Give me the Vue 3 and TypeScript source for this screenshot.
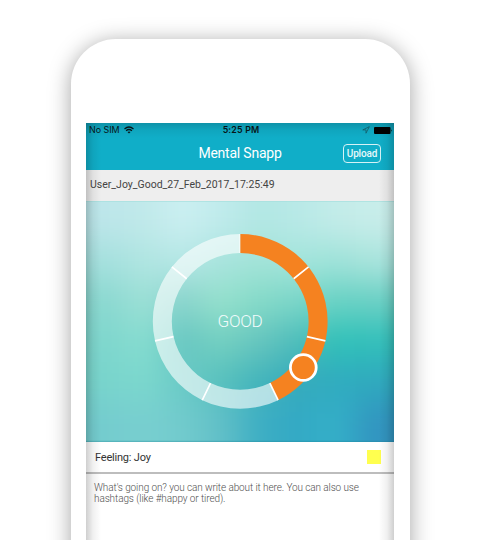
<script setup lang="ts">
interface Cell { x: number; y: number; color: string }

const palette: string[][] = [
  ['#bde6ea', '#c0e9ea', '#cbeff1', '#c0ebec', '#b2e7e4', '#b8e9e7', '#c3ece9', '#c8edea'],
  ['#a5e0de', '#b0e6e2', '#b6e7e6', '#a8e4de', '#a3e4d8', '#a3e5dc', '#9fe3d9', '#aae4dd'],
  ['#8ad8d0', '#9ce0d6', '#88d3cc', '#95e1cc', '#84dac8', '#7bd6c8', '#68d2c4', '#6ad0c4'],
  ['#7ed6cd', '#86ddd0', '#66c6c1', '#74d0c1', '#66c5be', '#4dbcba', '#30c1b8', '#32c0ba'],
  ['#78d4cc', '#7cd8ce', '#6acac6', '#56c0bd', '#42b4bb', '#35aabc', '#30acbf', '#2fa9be'],
  ['#74ccce', '#78cfd0', '#72cbcd', '#62c0c8', '#3daec3', '#33a9c5', '#34b0c8', '#3294c0'],
]

const cellW = 38.5
const cellH = 40.2
const cells: Cell[] = []
for (let r = -1; r <= 6; r++) {
  for (let c = -1; c <= 8; c++) {
    const row = palette[Math.min(5, Math.max(0, r))]
    cells.push({ x: c * cellW, y: r * cellH, color: row[Math.min(7, Math.max(0, c))] })
  }
}

const cx = 154.2
const cy = 120.4
const outer = 87.4
const inner = 68.4
const step = (Math.PI * 2) / 7

function point(radius: number, angle: number): string {
  return `${(cx + radius * Math.sin(angle)).toFixed(2)} ${(cy - radius * Math.cos(angle)).toFixed(2)}`
}

function arc(from: number, to: number): string {
  const large = to - from > Math.PI ? 1 : 0
  return `M${point(outer, from)}A${outer} ${outer} 0 ${large} 1 ${point(outer, to)}L${point(inner, to)}A${inner} ${inner} 0 ${large} 0 ${point(inner, from)}Z`
}

const filled = arc(0, step * 3)
const remaining = arc(step * 3, step * 7)
const ticks = [1, 2, 3, 4, 5, 6].map((i) => `M${point(inner, step * i)}L${point(outer, step * i)}`).join('')
</script>

<template>
  <main class="stage">
    <div class="phone">
      <div class="screen">
        <header class="top">
          <div class="status">
            <div class="carrier">
              <span>No SIM</span>
              <svg width="10" height="8" viewBox="0 0 10 8" fill="none" stroke="#071619" stroke-width="1.3">
                <path d="M.5 2.9Q5-.9 9.500 2.900M2.100 4.700Q5 2.300 7.900 4.700" />
                <path d="M3.500 6Q5 4.800 6.500 6L5 7.600Z" fill="#071619" stroke="none" />
              </svg>
            </div>
            <span class="clock">5:25 PM</span>
            <div class="power">
              <svg width="8" height="8" viewBox="0 0 8 8" fill="none" stroke="#17606b" stroke-width=".8">
                <path d="M7.300.7L.8 3.900H4V7.200Z" />
              </svg>
              <svg width="19" height="7" viewBox="0 0 19 7">
                <rect width="16.500" height="7" rx="1" fill="#000" />
                <path d="M17.200 2.200Q18.600 3.500 17.200 4.800Z" fill="#000" />
              </svg>
            </div>
          </div>
          <div class="nav">
            <h1>Mental Snapp</h1>
            <button type="button">Upload</button>
          </div>
        </header>
        <div class="filename">User_Joy_Good_27_Feb_2017_17:25:49</div>
        <svg class="mood" width="308" height="241" viewBox="0 0 308 241">
          <defs>
            <filter id="soft" filterUnits="userSpaceOnUse" x="-50" y="-50" width="408" height="341" color-interpolation-filters="sRGB">
              <feGaussianBlur stdDeviation="16" />
            </filter>
          </defs>
          <g filter="url(#soft)">
            <rect v-for="(cell, i) in cells" :key="i" :x="cell.x" :y="cell.y" width="39" height="40.7" :fill="cell.color" />
          </g>
          <path d="M0 .5H308" stroke="#a6e0de" stroke-opacity=".7" />
          <path d="M0 240.300H308" stroke="#1b8398" stroke-opacity=".4" />
          <path :d="remaining" fill="#fff" fill-opacity=".61" />
          <path :d="filled" fill="#f58220" />
          <path d="M153.800 33V52" stroke="#fff" stroke-opacity=".7" />
          <path :d="ticks" stroke="#fff" stroke-width="1.600" />
          <circle cx="217.300" cy="166.500" r="12.900" fill="#f58220" stroke="#fff" stroke-width="2.800" />
          <text x="153.900" y="126.300" text-anchor="middle">GOOD</text>
        </svg>
        <div class="feeling">
          <span>Feeling: Joy</span>
          <span class="swatch"></span>
        </div>
        <p class="note">What's going on? you can write about it here. You can also use<br />hashtags (like #happy or tired).</p>
      </div>
    </div>
  </main>
</template>

<style>
body {
  margin: 0;
  background: #fff;
}
</style>

<style scoped>
.stage {
  box-sizing: border-box;
  height: 540px;
  padding: 39px 70px 0 71px;
  overflow: hidden;
  font-family: Roboto, sans-serif;
}
.phone {
  box-sizing: border-box;
  height: 620px;
  padding: 84px 16px 0 15px;
  border-radius: 45px;
  background: #fff;
  box-shadow: 0 3px 22px rgba(0, 0, 0, .36);
}
.screen {
  position: relative;
  height: 536px;
  background: #fff;
}
.screen::after {
  content: "";
  position: absolute;
  inset: 0;
  pointer-events: none;
  background:
    linear-gradient(90deg, rgba(0, 0, 0, .19), rgba(0, 0, 0, .06) 7px, transparent 15px),
    linear-gradient(270deg, rgba(0, 0, 0, .19), rgba(0, 0, 0, .06) 7px, transparent 15px),
    linear-gradient(180deg, rgba(0, 0, 0, .16), rgba(0, 0, 0, .05) 7px, transparent 15px);
}
.top {
  height: 47px;
  background: #10aec8;
}
.status {
  display: grid;
  grid-template-columns: 1fr auto 1fr;
  align-items: center;
  height: 14px;
  padding: 0 1px 0 3px;
  font: 400 8.900px/14px Inter, sans-serif;
  color: #071619;
}
.carrier,
.power {
  display: flex;
  align-items: center;
  gap: 4px;
}
.power {
  justify-content: flex-end;
}
.clock {
  font-weight: 600;
  letter-spacing: .15px;
}
.nav {
  display: grid;
  grid-template-columns: 1fr auto 1fr;
  align-items: center;
  height: 33px;
  padding-right: 13px;
  color: #fff;
}
.nav h1 {
  grid-column: 2;
  margin: -1px 0 0 13px;
  font-size: 14px;
  letter-spacing: -.22px;
  line-height: 18px;
  font-weight: 400;
}
.nav button {
  justify-self: end;
  box-sizing: border-box;
  width: 38px;
  height: 19px;
  margin-top: -1px;
  padding: 0;
  border: 1px solid #d6f2f6;
  border-radius: 4px;
  background: none;
  font: 500 10px/17px Roboto, sans-serif;
  letter-spacing: -.15px;
  color: #e6f8fa;
}
.filename {
  box-sizing: border-box;
  height: 31px;
  padding-left: 4px;
  background: #eee;
  font-size: 10.500px;
  line-height: 30px;
  color: #444;
}
.mood {
  display: block;
  overflow: hidden;
}
.mood text {
  font-size: 17.200px;
  font-weight: 300;
  letter-spacing: -.4px;
  fill: #f2fbfb;
}
.feeling {
  box-sizing: border-box;
  display: flex;
  align-items: center;
  justify-content: space-between;
  height: 32px;
  padding: 0 13px 0 9px;
  border-bottom: 2px solid #bdbdbd;
  font-size: 11px;
  letter-spacing: -.2px;
  color: #333;
}
.swatch {
  width: 14px;
  height: 14px;
  background: #ffff4f;
}
.note {
  margin: 0;
  padding: 8px 0 0 8px;
  font-size: 10px;
  letter-spacing: -.1px;
  line-height: 11px;
  font-weight: 300;
  color: #505050;
  white-space: nowrap;
}
</style>
